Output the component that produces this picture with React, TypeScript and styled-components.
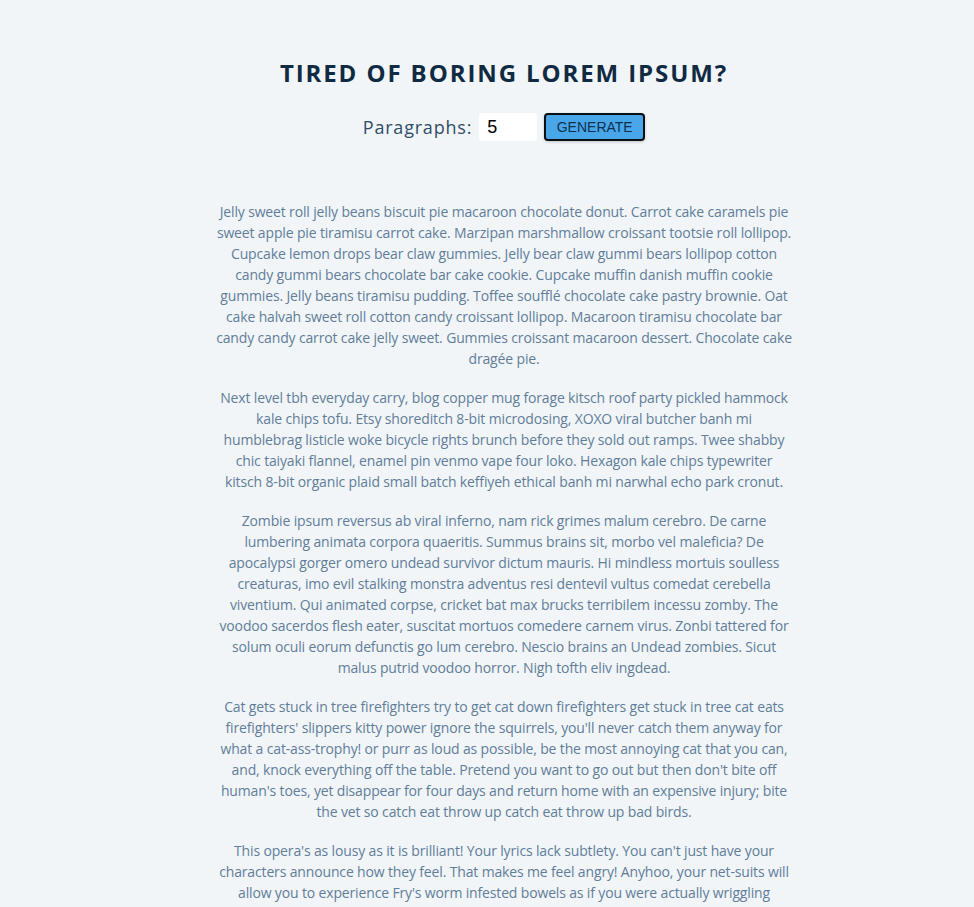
import React, { useState } from "react";
import styled, { createGlobalStyle } from "styled-components";

const GlobalStyle = createGlobalStyle`
  * { box-sizing: border-box; }
  body {
    margin: 0;
    background: #f1f5f8;
    color: #617d98;
    font-family: "Open Sans", "Noto Sans", sans-serif;
  }
`;

const Page = styled.main`
  padding: 58px 0 40px 34px;
`;

const Section = styled.section`
  width: 576px;
  margin: 0 auto;
  text-align: center;
`;

const Title = styled.h3`
  margin: 0;
  font-size: 24px;
  line-height: 30px;
  font-weight: 700;
  letter-spacing: 1.9px;
  text-transform: uppercase;
  color: #102a42;
`;

const Form = styled.form`
  display: flex;
  justify-content: center;
  align-items: center;
  margin: 25px 0 60px;
`;

const Label = styled.label`
  font-size: 18px;
  letter-spacing: 0.8px;
  color: #324d67;
  margin-right: 7px;
`;

const NumberInput = styled.input`
  width: 58px;
  height: 28px;
  border: none;
  border-radius: 3px;
  background: #fff;
  padding: 0 8px;
  font-family: "Liberation Sans", Arial, sans-serif;
  font-size: 18px;
  color: #000;
  margin-right: 7px;
  outline: none;
`;

const Button = styled.button`
  width: 101px;
  height: 28px;
  background: #49a6e9;
  border: 2px solid #0a0f14;
  border-radius: 4px;
  color: #0d3250;
  font-family: "Liberation Sans", Arial, sans-serif;
  font-size: 14px;
  text-transform: uppercase;
  box-shadow: 0 1px 3px rgba(0, 0, 0, 0.2);
  cursor: pointer;
`;

const Article = styled.article``;

const Paragraph = styled.p`
  margin: 0 0 18px;
  font-size: 14px;
  line-height: 21px;
  letter-spacing: -0.15px;
  color: #617d98;
`;

const texts = [
  "Jelly sweet roll jelly beans biscuit pie macaroon chocolate donut. Carrot cake caramels pie sweet apple pie tiramisu carrot cake. Marzipan marshmallow croissant tootsie roll lollipop. Cupcake lemon drops bear claw gummies. Jelly bear claw gummi bears lollipop cotton candy gummi bears chocolate bar cake cookie. Cupcake muffin danish muffin cookie gummies. Jelly beans tiramisu pudding. Toffee soufflé chocolate cake pastry brownie. Oat cake halvah sweet roll cotton candy croissant lollipop. Macaroon tiramisu chocolate bar candy candy carrot cake jelly sweet. Gummies croissant macaroon dessert. Chocolate cake dragée pie.",
  "Next level tbh everyday carry, blog copper mug forage kitsch roof party pickled hammock kale chips tofu. Etsy shoreditch 8-bit microdosing, XOXO viral butcher banh mi humblebrag listicle woke bicycle rights brunch before they sold out ramps. Twee shabby chic taiyaki flannel, enamel pin venmo vape four loko. Hexagon kale chips typewriter kitsch 8-bit organic plaid small batch keffiyeh ethical banh mi narwhal echo park cronut.",
  "Zombie ipsum reversus ab viral inferno, nam rick grimes malum cerebro. De carne lumbering animata corpora quaeritis. Summus brains sit, morbo vel maleficia? De apocalypsi gorger omero undead survivor dictum mauris. Hi mindless mortuis soulless creaturas, imo evil stalking monstra adventus resi dentevil vultus comedat cerebella viventium. Qui animated corpse, cricket bat max brucks terribilem incessu zomby. The voodoo sacerdos flesh eater, suscitat mortuos comedere carnem virus. Zonbi tattered for solum oculi eorum defunctis go lum cerebro. Nescio brains an Undead zombies. Sicut malus putrid voodoo horror. Nigh tofth eliv ingdead.",
  "Cat gets stuck in tree firefighters try to get cat down firefighters get stuck in tree cat eats firefighters' slippers kitty power ignore the squirrels, you'll never catch them anyway for what a cat-ass-trophy! or purr as loud as possible, be the most annoying cat that you can, and, knock everything off the table. Pretend you want to go out but then don't bite off human's toes, yet disappear for four days and return home with an expensive injury; bite the vet so catch eat throw up catch eat throw up bad birds.",
  "This opera's as lousy as it is brilliant! Your lyrics lack subtlety. You can't just have your characters announce how they feel. That makes me feel angry! Anyhoo, your net-suits will allow you to experience Fry's worm infested bowels as if you were actually wriggling through them. I just told you! You've killed me! Fry! Quit doing the right thing, you jerk! Michelle, I don't regret this, but I both rue and lament it. Morbo can't understand his teleprompter because he forgot how you say that letter that's shaped like a man wearing a hat.",
];

export default function App() {
  const [count, setCount] = useState(5);
  return (
    <>
      <GlobalStyle />
      <Page>
        <Section>
          <Title>tired of boring lorem ipsum?</Title>
          <Form onSubmit={(e) => e.preventDefault()}>
            <Label htmlFor="amount">Paragraphs:</Label>
            <NumberInput
              type="number"
              id="amount"
              value={count}
              onChange={(e) => setCount(Number(e.target.value))}
            />
            <Button type="submit">generate</Button>
          </Form>
          <Article>
            {texts.slice(0, Math.max(0, count)).map((t, i) => (
              <Paragraph key={i}>{t}</Paragraph>
            ))}
          </Article>
        </Section>
      </Page>
    </>
  );
}
